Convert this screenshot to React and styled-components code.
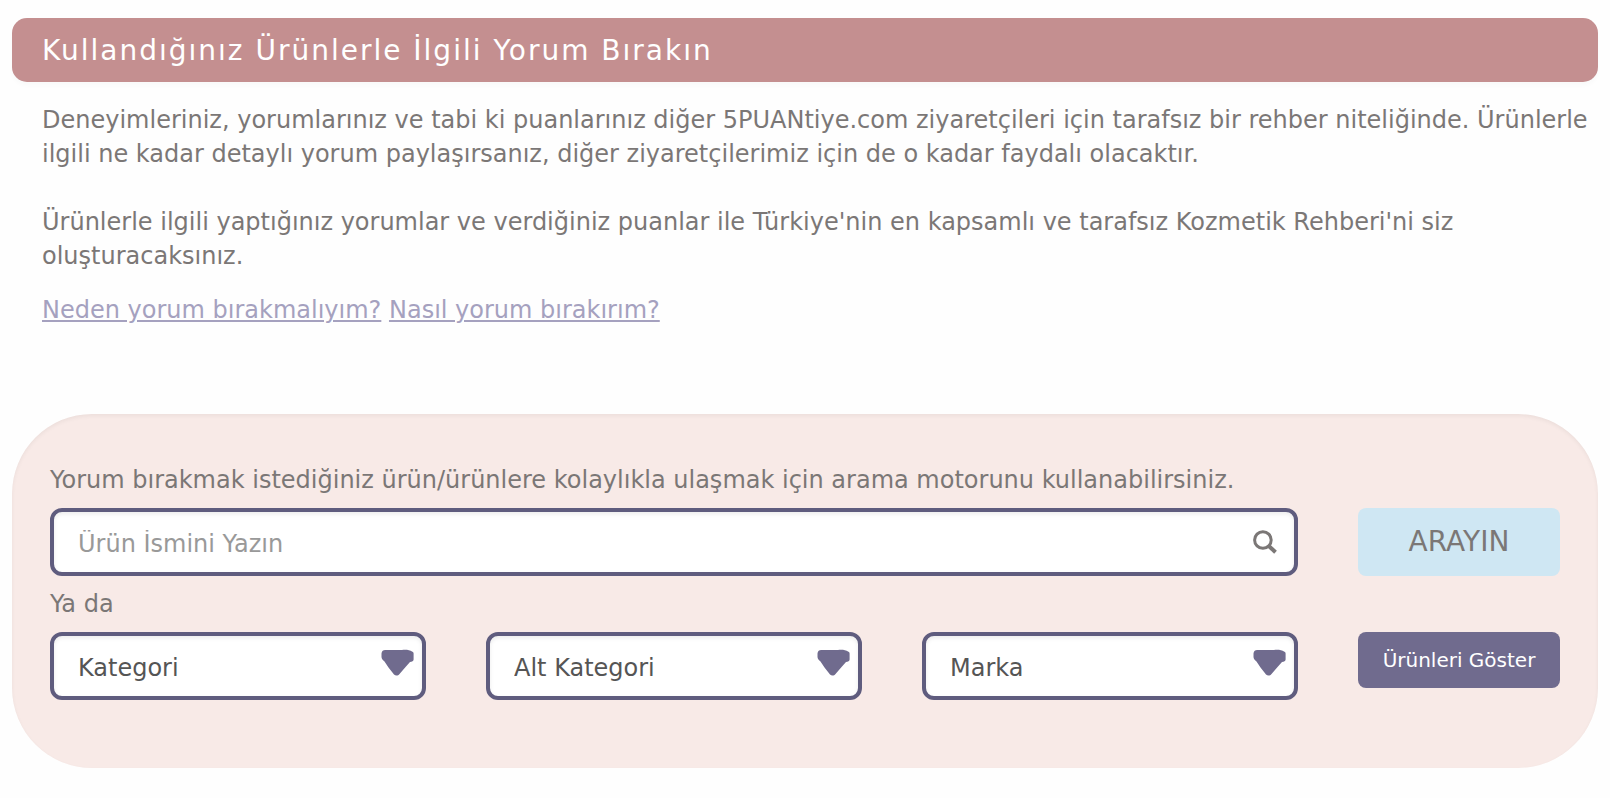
import React from "react";
import styled, { createGlobalStyle, css } from "styled-components";

const GlobalStyle = createGlobalStyle`
  *, *::before, *::after { box-sizing: border-box; }
  body {
    margin: 0;
    background: #fefefe;
    color: #7b7776;
    font: 24px/34px Verdana, "DejaVu Sans", sans-serif;
  }
`;

const Page = styled.main`
  padding: 18px 12px 30px;
`;

const Title = styled.h1`
  margin: 0;
  padding: 16px 30px 14px;
  border-radius: 15px;
  background: #c48f90;
  box-shadow: 0 4px 4px rgba(0, 0, 0, 0.02);
  color: #fff;
  font-size: 28px;
  font-weight: 400;
  line-height: 34px;
  letter-spacing: 2px;
`;

const Intro = styled.section`
  padding: 21px 0 0 30px;
`;

const Paragraph = styled.p`
  margin: 0 0 34px;

  &:last-of-type {
    margin-bottom: 20px;
  }
`;

const HelpLink = styled.a`
  color: #a5a1bf;
  text-decoration: underline;
  text-decoration-thickness: 2px;
  text-underline-offset: 2px;
`;

const SearchPanel = styled.form`
  display: grid;
  grid-template-columns: repeat(3, minmax(0, 1fr)) 202px;
  gap: 11px 60px;
  align-items: start;
  margin-top: 87px;
  padding: 49px 38px 68px;
  border-radius: 80px;
  background: #f8eae7;
  box-shadow: inset 0 2px 4px rgba(0, 0, 0, 0.05);
`;

const Caption = styled.label`
  grid-column: 1 / -1;
`;

const Divider = styled.span`
  grid-column: 1 / -1;
`;

const Field = styled.div`
  display: grid;
  align-items: center;
  grid-column: ${(p) => (p.$wide ? "span 3" : "auto")};

  > * {
    grid-area: 1 / 1;
  }
`;

const control = css`
  width: 100%;
  height: 68px;
  margin: 0;
  padding: 4px 60px 0 24px;
  border: 4px solid #5f5c7e;
  border-radius: 12px;
  background: #fff;
  box-shadow: inset 0 2px 4px rgba(0, 0, 0, 0.08);
  color: #555;
  font: inherit;
  appearance: none;
`;

const TextInput = styled.input`
  ${control}

  &::placeholder {
    color: #999;
    opacity: 1;
  }
`;

const Select = styled.select`
  ${control}
`;

const SearchIcon = styled.svg`
  justify-self: end;
  width: 24px;
  height: 24px;
  margin-right: 21px;
  pointer-events: none;
`;

const ArrowIcon = styled.svg`
  justify-self: end;
  align-self: start;
  width: 33px;
  height: 27px;
  margin: 17px 12px 0 0;
  pointer-events: none;
`;

const Button = styled.button`
  width: 100%;
  height: ${(p) => (p.$primary ? 56 : 68)}px;
  padding: 0;
  border: 0;
  border-radius: 8px;
  background: ${(p) => (p.$primary ? "#706b8e" : "#cfe7f3")};
  color: ${(p) => (p.$primary ? "#fff" : "#7b7776")};
  font: inherit;
  font-size: ${(p) => (p.$primary ? 20 : 28)}px;
  cursor: pointer;
`;

const FILTERS = ["Kategori", "Alt Kategori", "Marka"];

function Dropdown({ name }) {
  return (
    <Field>
      <Select aria-label={name} defaultValue={name}>
        <option>{name}</option>
      </Select>
      <ArrowIcon viewBox="0 0 33 27" aria-hidden="true">
        <path
          fill="#706b8e"
          d="M3 1.200 C4 .7 6 .9 8 1 L21 1 C25 .6 29 1 31 2.500 C32.500 3 32.600 3.500 32.600 5 L32.600 10.500 C32.600 12 31 12.700 29 13 L25 17.500 L18.500 25 C17 27 14.500 27 13 25.500 L7.500 18.500 L3.500 12.500 C2 11 .5 10 .5 8 L.5 4.500 C.8 2.500 1.500 1.500 3 1.200Z"
        />
      </ArrowIcon>
    </Field>
  );
}

export default function App() {
  return (
    <>
      <GlobalStyle />
      <Page>
        <Title>Kullandığınız Ürünlerle İlgili Yorum Bırakın</Title>
        <Intro>
          <Paragraph>
            Deneyimleriniz, yorumlarınız ve tabi ki puanlarınız diğer
            5PUANtiye.com ziyaretçileri için tarafsız bir rehber niteliğinde.
            Ürünlerle ilgili ne kadar detaylı yorum paylaşırsanız, diğer
            ziyaretçilerimiz için de o kadar faydalı olacaktır.
          </Paragraph>
          <Paragraph>
            Ürünlerle ilgili yaptığınız yorumlar ve verdiğiniz puanlar ile
            Türkiye'nin en kapsamlı ve tarafsız Kozmetik Rehberi'ni siz
            oluşturacaksınız.
          </Paragraph>
          <HelpLink href="#neden">Neden yorum bırakmalıyım?</HelpLink>{" "}
          <HelpLink href="#nasil">Nasıl yorum bırakırım?</HelpLink>
        </Intro>
        <SearchPanel onSubmit={(e) => e.preventDefault()}>
          <Caption htmlFor="product">
            Yorum bırakmak istediğiniz ürün/ürünlere kolaylıkla ulaşmak için
            arama motorunu kullanabilirsiniz.
          </Caption>
          <Field $wide>
            <TextInput id="product" type="text" placeholder="Ürün İsmini Yazın" />
            <SearchIcon viewBox="0 0 24 24" aria-hidden="true">
              <g fill="none" stroke="#7b7776">
                <circle cx="9.900" cy="10" r="8.300" strokeWidth="3" />
                <path d="M15.800 16 L22.500 22.300" strokeWidth="4" />
              </g>
            </SearchIcon>
          </Field>
          <Button type="submit">ARAYIN</Button>
          <Divider>Ya da</Divider>
          {FILTERS.map((name) => (
            <Dropdown key={name} name={name} />
          ))}
          <Button type="button" $primary>
            Ürünleri Göster
          </Button>
        </SearchPanel>
      </Page>
    </>
  );
}
